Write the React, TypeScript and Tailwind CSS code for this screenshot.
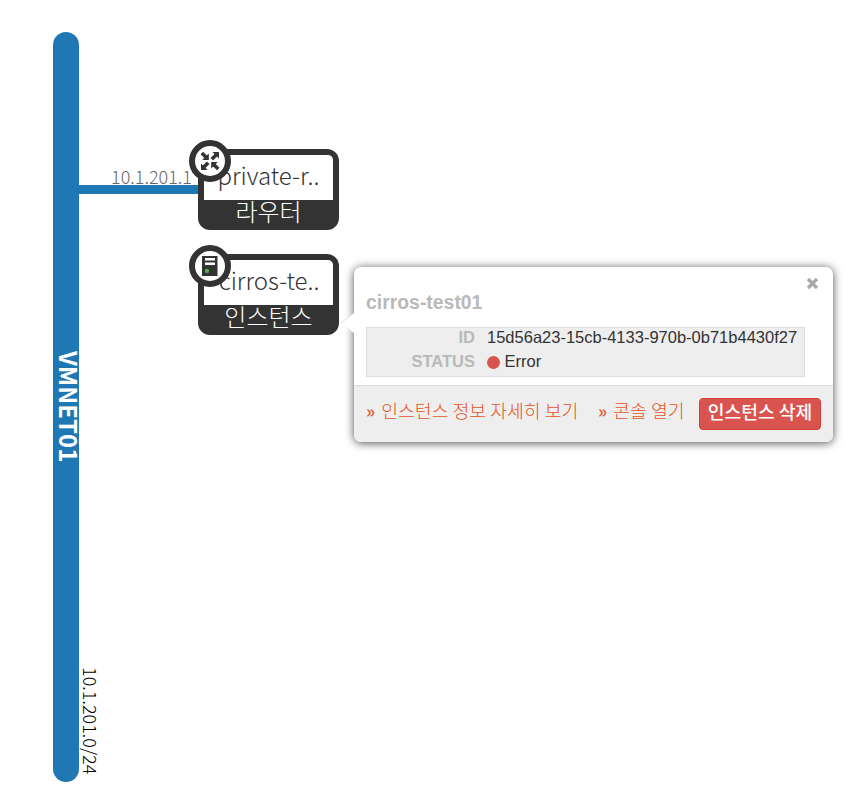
import { ReactNode } from "react";

const KR = "font-['Noto_Sans_CJK_KR','Noto_Sans',sans-serif]";

function RouterIcon() {
  return (
    <svg width="20" height="20" viewBox="0 0 20 20" fill="#333333" stroke="#333333">
      {[0, 180].map((angle) => (
        <g key={angle} transform={`rotate(${angle} 10 10)`}>
          <path d="M8.8 2.4V9H2.2Z" stroke="none" />
          <path d="M1.8 2 6.6 6.8" strokeWidth="3.6" />
          <path d="M12.4 1H19V7.6Z" stroke="none" />
          <path d="M16.6 3.4 11.8 8.2" strokeWidth="3.6" />
        </g>
      ))}
    </svg>
  );
}

function ServerIcon() {
  return (
    <svg width="16" height="20" viewBox="0 0 16 20">
      <rect width="15.5" height="20" fill="#333333" />
      <rect x="3" y="2" width="10" height="2.5" fill="#fff" />
      <rect x="3" y="6.5" width="10" height="2.5" fill="#fff" />
      <circle cx="5" cy="15" r="2.2" fill="#4cae4c" />
    </svg>
  );
}

function DeviceNode({ name, type, icon, place }: { name: string; type: string; icon: ReactNode; place: string }) {
  return (
    <div className={`absolute h-[81px] w-[141px] ${place}`}>
      <div className="flex h-full flex-col overflow-hidden rounded-[12px] bg-[#333333] px-[6px] pt-[6px]">
        <div className={`h-[45px] rounded-t-[5px] bg-white pr-[13.5px] text-right text-[24px] font-light leading-[40px] text-[#333333] ${KR}`}>
          {name}
        </div>
        <div className={`text-center text-[24px] font-light leading-[22px] text-white ${KR}`}>{type}</div>
      </div>
      <div className="absolute -left-[9px] -top-[9px] flex h-[42px] w-[42px] items-center justify-center rounded-full border-[6px] border-[#333333] bg-white">
        {icon}
      </div>
    </div>
  );
}

function InstancePopover() {
  return (
    <div className="absolute left-[354px] top-[267px] flex h-[175px] w-[479px] flex-col rounded-[7px] bg-white font-['Liberation_Sans',Arial,sans-serif] shadow-[0_1px_10px_rgba(0,0,0,0.7)]">
      <svg className="absolute -left-[13px] top-[46px]" width="14" height="20" viewBox="0 0 14 20">
        <path d="M13 0 0 10 13 20H14V0Z" fill="#fff" />
        <path d="M13 0 0 10" stroke="#ddd" />
      </svg>
      <svg className="absolute left-[452px] top-[10px]" width="13" height="13" viewBox="0 0 13 13">
        <path d="M2 2 11 11M11 2 2 11" stroke="#a8a8a8" strokeWidth="3.2" />
      </svg>
      <div className="h-[118px] px-3 pt-[24px]">
        <h3 className="text-[19.4px] font-bold leading-[22px] text-[#b9b9b9]">cirros-test01</h3>
        <dl className="mt-[14px] grid h-[50px] w-[439px] grid-cols-[108px_1fr] content-start gap-x-3 border border-[#ddd] bg-[#eee] text-[16.5px] leading-[24px] text-[#333333]">
          <dt className="-mt-[3px] text-right font-bold text-[#b9b9b9]">ID</dt>
          <dd className="-mt-[3px] whitespace-nowrap">15d56a23-15cb-4133-970b-0b71b4430f27</dd>
          <dt className="text-right font-bold text-[#b9b9b9]">STATUS</dt>
          <dd className="flex items-center gap-[4.5px]">
            <span className="mt-[2px] h-[13px] w-[13px] rounded-full bg-[#d9534f]" />
            Error
          </dd>
        </dl>
      </div>
      <div className={`flex flex-1 rounded-b-[7px] border-t border-[#ddd] bg-[#eee] px-3 pt-3 text-[18.3px] leading-[24px] text-[#e95420] ${KR}`}>
        <a className="w-[232px] whitespace-nowrap font-light"><span className="mr-[2px] font-medium">»</span> 인스턴스 정보 자세히 보기</a>
        <a className="whitespace-nowrap font-light"><span className="mr-[2px] font-medium">»</span> 콘솔 열기</a>
        <button className="ml-auto h-8 w-[122px] whitespace-nowrap rounded-[4px] border border-[#d43f3a] bg-[#d9534f] pb-[6px] text-[18.2px] font-medium leading-[24px] text-white">
          인스턴스 삭제
        </button>
      </div>
    </div>
  );
}

export default function App() {
  return (
    <main className="relative h-[800px] w-[865px] overflow-hidden bg-white">
      <div className="absolute left-[53px] top-[32px] flex h-[750px] w-[25.5px] items-center justify-center rounded-full bg-[#1f77b4]">
        <span className={`relative left-[3px] text-[24px] font-bold leading-[26px] text-white [writing-mode:vertical-rl] ${KR}`}>VMNET01</span>
      </div>
      <span className={`absolute left-[78px] top-[667px] whitespace-nowrap text-[18px] font-light leading-[26px] text-black [writing-mode:vertical-rl] ${KR}`}>
        10.1.201.0/24
      </span>
      <div className="absolute left-[78px] top-[185px] h-[9px] w-[122px] bg-[#1f77b4]" />
      <span className={`absolute left-[111px] top-[163px] text-[18px] font-light leading-[26px] text-[#666666] ${KR}`}>10.1.201.1</span>
      <DeviceNode name="private-r.." type="라우터" icon={<RouterIcon />} place="left-[198px] top-[149px]" />
      <DeviceNode name="cirros-te.." type="인스턴스" icon={<ServerIcon />} place="left-[198px] top-[254px]" />
      <InstancePopover />
    </main>
  );
}
